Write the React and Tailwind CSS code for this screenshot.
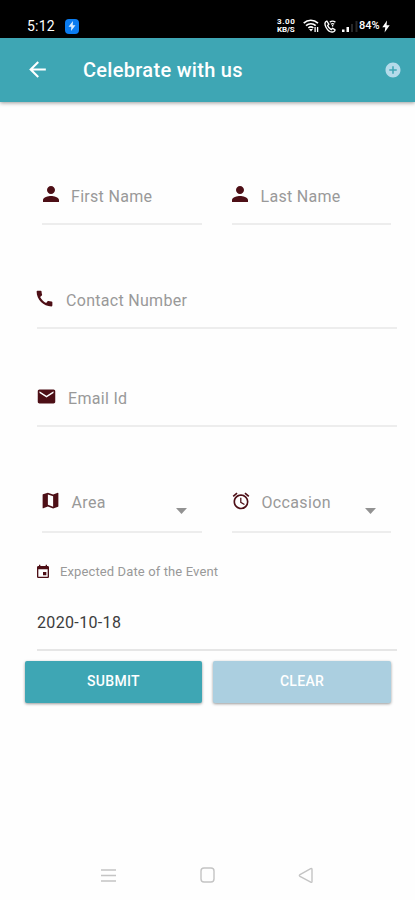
import { useState } from "react";
import {
  MdAddCircle,
  MdAlarm,
  MdArrowBack,
  MdCall,
  MdEmail,
  MdEvent,
  MdMap,
  MdPerson,
} from "react-icons/md";

function StatusBar() {
  return (
    <div className="flex h-[38px] items-end justify-between bg-black pr-[25px] pb-[4px] pl-[27px] text-white">
      <div className="flex items-center">
        <span className="w-[38px] text-[14px] leading-[16px] tracking-[0.2px]">5:12</span>
        <span className="flex h-[15px] w-[14px] items-center justify-center rounded-[4px] bg-[#0b7cf0]">
          <svg width="10" height="12" viewBox="0 0 10 12">
            <path d="M6 1 1.5 6.8H4.3L4 11 8.5 5.2H5.7Z" fill="#d9ecff" />
          </svg>
        </span>
      </div>

      <div className="flex h-[16px] items-center">
        <div className="flex w-[26px] flex-col text-[8px] leading-[8px] font-bold">
          <span className="tracking-[0.6px]">3.00</span>
          <span className="tracking-[-0.1px]">KB/S</span>
        </div>
        {/* Wifi */}
        <svg className="mr-[5px]" width="16" height="14" viewBox="0 0 16 14" fill="none" stroke="#fff" strokeWidth="1.6">
          <path d="M.7 4.2C4.8.3 10.8.3 15 4.2M3 6.7c2.8-2.6 7-2.6 9.7 0M5.3 9c1.5-1.4 3.6-1.4 5 0" />
          <path d="M6 10h4l-2 2.6Z" fill="#fff" stroke="none" />
          <path d="M12.1 8v5M14.6 8v5" strokeWidth="1.3" />
        </svg>
        {/* Wifi calling */}
        <svg className="mr-[6px]" width="12" height="13" viewBox="0 0 12 13" fill="none" stroke="#fff" strokeWidth="1.4">
          <path d="M2.8 1.2C.5 2 .5 4.3 2 7.2c1.8 3.3 4.7 5.3 7.2 4.6 1.4-.4 1.9-1.5 1.7-2.2L8.6 8.3 7.2 9.6C5.5 8.8 4.3 7.4 3.6 5.6l1.2-1.4Z" />
          <path d="M5.8 2.1c1.7-1.2 3.8-1.2 5.6 0M7 4.2c1-.7 2.2-.7 3.2 0M8.6 5v1.5" />
        </svg>
        <svg className="mr-[1px]" width="16" height="13" viewBox="0 0 16 13">
          <path d="M0 9.5h2.5V12H0ZM4.5 7H7v5H4.5Z" fill="#fff" />
          <path d="M9 4h2v8H9ZM13.5 1h2v11h-2Z" fill="#292929" />
        </svg>
        <span className="w-[23px] text-[11px] leading-[14px] font-medium">84%</span>
        <svg width="8" height="13" viewBox="0 0 8 13">
          <path d="M5 .5.3 7.2h3L2.6 12.5 7.7 5.2H4.6Z" fill="#fff" />
        </svg>
      </div>
    </div>
  );
}

function Header() {
  return (
    <header className="flex h-[64px] items-center bg-[#3ea6b4] pr-[13px] pb-px pl-[25px] text-white shadow-[0_1px_4px_rgba(0,0,0,0.4)]">
      <MdArrowBack size={25} />
      <h1 className="ml-[33px] flex-1 text-[20px] leading-6 font-medium tracking-[0.3px]">Celebrate with us</h1>
      <MdAddCircle size={18} className="text-[#b5dbea]" />
    </header>
  );
}

function Field({ icon, label, className, labelClass, select }) {
  return (
    <label className={`flex items-center border-b-2 border-[#ededed] ${className}`}>
      <span className="flex shrink-0 items-center text-[#4d0f16]">{icon}</span>
      <span className={`flex-1 leading-5 text-[#999] ${labelClass}`}>{label}</span>
      {select && (
        <svg className="mt-[17px] mr-[15px]" width="11" height="6" viewBox="0 0 11 6">
          <path d="M0 0h11L5.5 6Z" fill="#929292" />
        </svg>
      )}
    </label>
  );
}

function NavBar() {
  return (
    <nav className="mt-auto flex h-[50px] items-center justify-between pr-[101px] pl-[101px]">
      <svg width="15" height="15" viewBox="0 0 15 15" fill="none" stroke="#c4c4c4" strokeWidth="1.3">
        <path d="M0 2h15M0 7.5h15M0 13h15" />
      </svg>
      <svg width="15" height="16" viewBox="0 0 15 16" fill="none" stroke="#c4c4c4" strokeWidth="1.4">
        <rect x="1" y="1" width="13" height="14" rx="3" />
      </svg>
      <svg width="16" height="17" viewBox="0 0 16 17" fill="none" stroke="#c4c4c4" strokeWidth="1.4">
        <path d="M12.7 1.7 2 7.6q-1.3.8 0 1.7l10.7 5.9q1.3.5 1.3-.8V2.5q0-1.3-1.3-.8Z" />
      </svg>
    </nav>
  );
}

export default function App() {
  const [date] = useState("2020-10-18");

  return (
    <div className="flex h-[900px] w-[415px] flex-col bg-[#fefefe] font-[Roboto,sans-serif]">
      <StatusBar />
      <Header />

      <main className="flex flex-col">
        {/* Name */}
        <div className="mt-[66px] flex gap-[30px] pl-[42px]">
          <Field
            icon={<MdPerson size={24} className="-mt-[3px] -ml-[3.5px]" />}
            label="First Name"
            labelClass="pl-[8.5px] pt-[2px] text-[16px] tracking-[0.3px]"
            className="h-[57px] w-[160px]"
          />
          <Field
            icon={<MdPerson size={24} className="-mt-[3px] -ml-[4px]" />}
            label="Last Name"
            labelClass="pl-[8.5px] pt-[2px] text-[16px] tracking-[0.3px]"
            className="h-[57px] w-[159px]"
          />
        </div>

        {/* Contact */}
        <Field
          icon={<MdCall size={21} className="-ml-[3px] -mt-[2px]" />}
          label="Contact Number"
          labelClass="pl-[11px] pt-[2px] text-[16px] tracking-[0.3px]"
          className="mt-[47px] ml-[37px] h-[57px] w-[360px]"
        />
        <Field
          icon={<MdEmail size={21} className="-ml-[1.5px] -mt-[3px]" />}
          label="Email Id"
          labelClass="pl-[11.5px] pt-[2px] text-[16px] tracking-[0.3px]"
          className="mt-[41px] ml-[37px] h-[57px] w-[360px]"
        />

        {/* Area and occasion */}
        <div className="mt-[47px] flex gap-[30px] pl-[42px]">
          <Field
            icon={<MdMap size={21} className="-ml-[2px] -mt-[5px]" />}
            label="Area"
            labelClass="pl-[10.5px] pt-px text-[16px] tracking-[0.35px]"
            className="h-[59px] w-[160px]"
            select
          />
          <Field
            icon={<MdAlarm size={20} className="-ml-[1px] -mt-[4px]" />}
            label="Occasion"
            labelClass="pl-[10.5px] pt-px text-[16px] tracking-[0.35px]"
            className="h-[59px] w-[159px]"
            select
          />
        </div>

        {/* Date */}
        <div className="mt-[29px] flex h-[20px] items-center pl-[35px]">
          <MdEvent size={16} className="text-[#4d0f16]" />
          <span className="pl-[9px] text-[13px] leading-4 tracking-[0.12px] text-[#999]">Expected Date of the Event</span>
        </div>
        <div className="ml-[37px] h-[69px] w-[360px] border-b-2 border-[#e6e6e6] pt-[31px] text-[16px] leading-5 tracking-[0.35px] text-[#3c3c3c]">
          {date}
        </div>

        {/* Actions */}
        <div className="mt-[10px] flex gap-[11px] pl-[25px] text-[14px] font-medium tracking-[0.3px] text-white">
          <button
            type="button"
            className="h-[42px] w-[177px] rounded-[2px] bg-[#3ea6b4] pb-[2px] shadow-[0_1px_3px_rgba(0,0,0,0.4)]"
          >
            SUBMIT
          </button>
          <button
            type="button"
            className="h-[42px] w-[178px] rounded-[2px] bg-[#abcfe0] pb-[2px] shadow-[0_1px_3px_rgba(0,0,0,0.4)]"
          >
            CLEAR
          </button>
        </div>
      </main>

      <NavBar />
    </div>
  );
}
